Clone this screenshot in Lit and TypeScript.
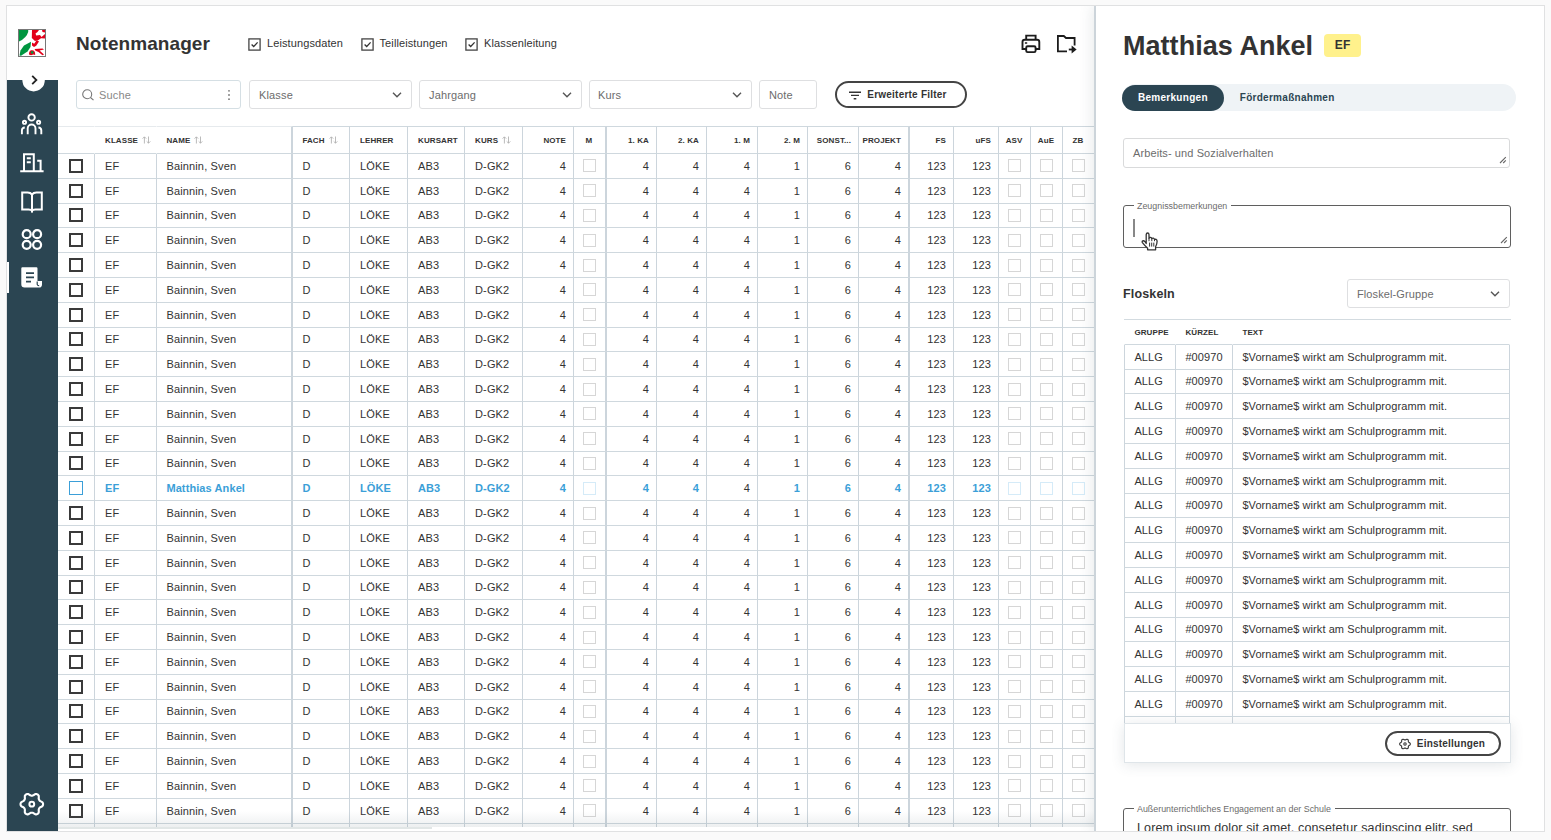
import { LitElement, html, svg, css, nothing } from "lit";
import { customElement } from "lit/decorators.js";
import { classMap } from "lit/directives/class-map.js";

type Kind = "text" | "num" | "box" | "check";
interface Column {
  label: string;
  value: string;
  kind: Kind;
  sort?: boolean;
  heavy?: boolean;
  plain?: boolean;
  narrow?: boolean;
}

const columns: Column[] = [
  { label: "", value: "", kind: "check", narrow: true },
  { label: "KLASSE", value: "EF", kind: "text", sort: true, narrow: true },
  { label: "NAME", value: "Bainnin, Sven", kind: "text", sort: true, heavy: true },
  { label: "FACH", value: "D", kind: "text", sort: true },
  { label: "LEHRER", value: "LÖKE", kind: "text" },
  { label: "KURSART", value: "AB3", kind: "text" },
  { label: "KURS", value: "D-GK2", kind: "text", sort: true },
  { label: "NOTE", value: "4", kind: "num" },
  { label: "M", value: "", kind: "box", heavy: true },
  { label: "1. KA", value: "4", kind: "num" },
  { label: "2. KA", value: "4", kind: "num" },
  { label: "1. M", value: "4", kind: "num", plain: true },
  { label: "2. M", value: "1", kind: "num" },
  { label: "SONST...", value: "6", kind: "num" },
  { label: "PROJEKT", value: "4", kind: "num", heavy: true },
  { label: "FS", value: "123", kind: "num" },
  { label: "uFS", value: "123", kind: "num" },
  { label: "ASV", value: "", kind: "box" },
  { label: "AuE", value: "", kind: "box" },
  { label: "ZB", value: "", kind: "box" },
];

const SELECTED_ROW = 13;
const ROW_COUNT = 27;

/** Closed outline of a soft six-toothed cog. */
function cogPath(cx: number, cy: number, r: number, depth: number): string {
  const points: string[] = [];
  for (let i = 0; i < 72; i++) {
    const a = (i / 72) * Math.PI * 2;
    const k = Math.cos(6 * a);
    const rr = r + depth * Math.sign(k) * Math.pow(Math.abs(k), 0.6);
    points.push(`${(cx + rr * Math.cos(a)).toFixed(2)} ${(cy + rr * Math.sin(a)).toFixed(2)}`);
  }
  return `M${points.join("L")}Z`;
}

const chevron = html`<svg class="chev" width="10" height="6" viewBox="0 0 10 6">
  <path d="M1 .8 5 4.7 9 .8" fill="none" stroke="#555" stroke-width="1.4" />
</svg>`;

const sortIcon = html`<svg class="sort" width="9" height="8" viewBox="0 0 9 8">
  <path d="M2.4 7.5V1M.6 2.6 2.4.8 4.2 2.6M6.5.5V7M4.7 5.4 6.5 7.2 8.3 5.4" fill="none" stroke="#aaa" stroke-width=".8" />
</svg>`;

const grip = html`<svg class="grip" width="8" height="8" viewBox="0 0 8 8">
  <path d="M1 7 6.8 1.2M4.2 7 6.8 4.4" stroke="#666" stroke-width="1.1" />
</svg>`;

const tick = html`<svg width="13" height="13" viewBox="0 0 13 13">
  <rect x=".9" y=".9" width="11.2" height="11.2" fill="none" stroke="#444" stroke-width="1.3" />
  <path d="M3.6 6.5 5.7 8.5 9.6 4.4" fill="none" stroke="#333" stroke-width="1.3" />
</svg>`;

const navIcons = [
  svg`<g fill="none" stroke="#fff" stroke-width="1.9"><circle cx="11.6" cy="6.4" r="3.2"/><circle cx="4.5" cy="11.3" r="1.6"/><circle cx="18.6" cy="11.3" r="1.6"/><path d="M7.7 23.3V17.5a3.9 4 0 0 1 7.8 0V23.3M1.9 23.3V19.6Q1.9 16.7 4.8 16.5M21.3 23.3V19.6Q21.3 16.7 18.4 16.5"/></g>`,
  svg`<path d="M.2 21.2H23.6M4 21V4.2H13.8V21M6.8 8.3H10.8M6.8 12.2H10.8M17.2 10.7H20.6V21" fill="none" stroke="#fff" stroke-width="2"/>`,
  svg`<path d="M12 23.6V5.6Q10.6 3.6 7.6 3.6H2.2V20.4H8.6Q11.4 20.4 12 21.8Q12.6 20.4 15.4 20.4H21.8V3.6H16.4Q13.4 3.6 12 5.6" fill="none" stroke="#fff" stroke-width="2"/>`,
  svg`<g fill="none" stroke="#fff" stroke-width="2.2"><circle cx="6.7" cy="6.2" r="4"/><circle cx="17.1" cy="6.2" r="4"/><circle cx="6.7" cy="16.8" r="4"/><circle cx="17.1" cy="16.8" r="4"/></g>`,
  svg`<path d="M2.4 1.3H16.4Q17.5 1.3 17.5 2.4V15H22V18.4Q22 21.5 19 21.5H4.6Q1.3 21.5 1.3 18.2V2.4Q1.3 1.3 2.4 1.3Z" fill="#fff"/><path d="M6 7.1H14M6 11.4H14M6 15.7H11" stroke="#2b4552" stroke-width="1.7"/><path d="M17.2 15.6V18.4Q17.6 19.9 19.2 19.7" fill="none" stroke="#2b4552" stroke-width="1.2"/>`,
];

@customElement("app-root")
export class AppRoot extends LitElement {
  static styles = css`
    :host { display: block; width: 1551px; height: 840px; box-sizing: border-box; padding: 5px 6px 8px; background: #fafafa; overflow: hidden;
      font: 11px/1.2 "Liberation Sans", Arial, sans-serif; letter-spacing: 0.15px; color: #333; }
    * { box-sizing: border-box; }
    svg { display: block; flex: none; }
    .frame { display: flex; height: 827px; border: 1px solid #e0e1e2; background: #fff; overflow: hidden; }
    .side { width: 51px; display: flex; flex-direction: column; flex: none; height: 826px; }
    .brand { height: 74px; padding: 23px 0 0 11px; }
    .nav { flex: 1; background: #2b4552; display: flex; flex-direction: column; position: relative; }
    .toggle { position: absolute; left: 15px; top: -11px; }
    .icons { padding: 31px 0 0 13px; display: flex; flex-direction: column; gap: 14px; }
    .icons .current { margin-top: -1px; }
    .marker { position: absolute; left: 0; top: 182px; width: 2px; height: 31px; background: #fff; }
    .settings { margin: auto 0 14px 12px; }
    .main { width: 1036px; flex: none; display: flex; flex-direction: column; }
    .top { height: 74px; display: flex; align-items: center; padding: 2px 17px 0 18px; }
    h1 { margin: 1px 0 0; font-size: 19px; letter-spacing: 0.08px; width: 172px; }
    .opts { display: flex; gap: 17.5px; flex: 1; }
    .opt { display: flex; align-items: center; gap: 6px; letter-spacing: 0.1px; }
    .tools { display: flex; gap: 15px; }
    .filters { display: flex; align-items: center; height: 29px; padding-left: 18px; color: #6c6c6c; }
    .field { height: 29px; width: 163px; border: 1px solid #dedfe1; border-radius: 3px; display: flex; align-items: center; padding: 2px 9px 0 9px; margin-right: 7px; background: #fff; color: #6c6c6c; }
    .field svg { margin-top: -1px; }
    .search { width: 165px; margin-right: 8px; border-color: #d5dfe4; padding: 2px 9px 0 5px; gap: 5px; color: #888; }
    .grow { flex: 1; }
    .w-kurs { width: 163px; padding-left: 8px; }
    .w-note { width: 58px; margin-right: 18px; }
    .pill { border: 2px solid #444; border-radius: 14px; display: flex; align-items: center; justify-content: center; font-weight: 700; font-size: 10px; letter-spacing: 0.22px; color: #333; gap: 6px; background: #fff; padding-top: 1px; }
    .adv { width: 132px; height: 27px; padding-right: 7px; }
    .adv svg { margin-left: 1px; }
    .tablewrap { margin-top: 17px; height: 701px; overflow: hidden; width: 1037px; position: relative; flex: none; }
    .tablewrap::after { content: ""; position: absolute; left: 0; right: 0; bottom: 0; height: 16px; background: linear-gradient(rgba(90, 110, 120, 0), rgba(90, 110, 120, 0.11)); }
    .row { display: grid; grid-template-columns: 37px 62px 136px 57px 58px 57px 58px 51px 33px 50px 50px 51px 50px 51px 51px 44px 45px 32px 32px 32px; height: 24.8px; }
    .cell { display: flex; align-items: center; border-right: 1px solid #ccd5dc; border-bottom: 1px solid #cfd8de; padding: 1.2px 7px 0 10px; white-space: nowrap; min-width: 0; }
    .row .cell:nth-child(3), .row .cell:nth-child(4) { padding-left: 9.4px; }
    .cell.heavy { border-right: 2px solid #ccd5dc; }
    .num { justify-content: flex-end; }
    .cell.box, .cell.check { justify-content: center; padding: 0 1px 0 0; }
    .head { height: 28px; font-weight: 700; font-size: 8px; letter-spacing: 0.1px; }
    .head .cell { border-top: 1px solid #cfd8de; padding-top: 2px; }
    .head .cell.box { padding-top: 2px; }
    .head .narrow { border-right-color: transparent; }
    .head .cell:nth-child(-n + 3) { border-top-color: #e6eaed; }
    .sort { margin: -2px 0 0 4px; }
    .tick { width: 14px; height: 14px; border: 2px solid #3a3a3a; }
    .soft { width: 13px; height: 13px; border: 1.5px solid #d6d6d6; }
    .sel .cell { color: #3b9fd8; font-weight: 700; letter-spacing: 0.1px; padding-top: 0; }
    .sel .cell.plain { color: #333; font-weight: 400; }
    .sel .tick { border: 1.5px solid #3b9fd8; width: 14px; height: 14px; }
    .sel .soft { border-color: #d5ebf8; }
    .scroll { width: 374px; height: 2px; background: #e1e6e6; }
    .panel { flex: 1; border-left: 2px solid #ccd4da; background: #fff; box-shadow: -3px 0 12px rgba(60, 80, 90, 0.1); position: relative; z-index: 1; padding: 26px 33px 0 27px; display: flex; flex-direction: column; height: 826px; overflow: visible; }
    .person { display: flex; align-items: center; height: 28px; gap: 11px; }
    h2 { margin: 0; font-size: 27px; line-height: 28px; letter-spacing: 0.04px; }
    .badge { width: 37px; height: 23px; border-radius: 4px; background: #fff18c; display: flex; align-items: center; justify-content: center; font-weight: 700; font-size: 12px; letter-spacing: 0.3px; margin-top: -1px; }
    .tabs { margin: 24px -6px 0 -1px; height: 27px; border-radius: 14px; background: #eff3f6; display: flex; align-items: center; font-weight: 700; font-size: 10px; letter-spacing: 0.28px; color: #2b4552; flex: none; width: 394px; }
    .tab { height: 26px; padding: 0 16px; border-radius: 13px; display: flex; align-items: center; }
    .tab.on { background: #2b4552; color: #fff; }
    .area { width: 388px; border: 1px solid #d9dadb; border-radius: 3px; position: relative; flex: none; color: #6c6c6c; }
    .grip { position: absolute; right: 2px; bottom: 3px; }
    .first { margin-top: 27px; height: 30px; padding: 8px 9px; width: 387px; letter-spacing: 0.1px; }
    .second { margin-top: 37px; height: 43px; border-color: #5f5f5f; }
    .legend { position: absolute; left: 10px; top: -5px; background: #fff; padding: 0 4px 0 3px; font-size: 8.9px; letter-spacing: 0; line-height: 11px; color: #6c6c6c; }
    .caret { position: absolute; left: 9px; top: 13px; width: 1.5px; height: 18px; background: #888; }
    .hand { position: absolute; left: 17px; top: 26px; }
    .bar { display: flex; align-items: center; justify-content: space-between; width: 387px; height: 29px; margin-top: 31px; flex: none; }
    h3 { margin: 2px 0 0; font-size: 12.5px; letter-spacing: 0.15px; }
    .bar .field { margin: 0; width: 163px; letter-spacing: 0.1px; }
    .phrases { width: 387px; margin: 11px 0 0 1px; height: 404px; overflow: hidden; flex: none; border-top: 1px solid #d3dbe0; }
    .prow { display: grid; grid-template-columns: 52px 57px 277px; height: 24.8px; }
    .prow .cell:first-child { border-left: 1px solid #ccd5dc; }
    .prow .cell { letter-spacing: 0.08px; padding-right: 0; padding-left: 9.4px; border-right-color: #ccd5dc; }
    .phead { font-weight: 700; font-size: 8px; }
    .phead .cell, .phead .cell:first-child { border-left-color: transparent; border-right-color: transparent; letter-spacing: 0.1px; }
    .foot { width: 387px; height: 40px; margin-left: 1px; border: 1px solid #dfe5e9; display: flex; justify-content: flex-end; align-items: center; padding-right: 9px; box-shadow: 0 2px 14px rgba(60, 80, 90, 0.14); background: #fff; flex: none; position: relative; }
    .foot .pill { width: 116px; height: 25px; padding-right: 2px; }
    .last { margin-top: 45px; height: 60px; border-color: #5f5f5f; padding: 12px 13px; font-size: 12.5px; letter-spacing: 0.12px; color: #333; white-space: nowrap; }
  `;

  private cell(c: Column, selected: boolean) {
    const cls = classMap({ cell: true, [c.kind]: true, heavy: !!c.heavy, plain: !!c.plain });
    const body =
      c.kind === "check" ? html`<span class="tick"></span>` :
      c.kind === "box" ? html`<span class="soft"></span>` :
      selected && c.label === "NAME" ? "Matthias Ankel" : c.value;
    return html`<div class=${cls}>${body}</div>`;
  }

  private table() {
    return html`<div class="tablewrap">
      <div class="row head">
        ${columns.map((c) => html`<div class=${classMap({ cell: true, [c.kind]: true, heavy: !!c.heavy, narrow: !!c.narrow })}>${c.label}${c.sort ? sortIcon : nothing}</div>`)}
      </div>
      ${Array.from({ length: ROW_COUNT }, (_, i) => html`<div class=${classMap({ row: true, sel: i === SELECTED_ROW })}>
        ${columns.map((c) => this.cell(c, i === SELECTED_ROW))}
      </div>`)}
      <div class="row">
        ${columns.map((c) => html`<div class=${classMap({ cell: true, heavy: !!c.heavy })}></div>`)}
      </div>
    </div>`;
  }

  private sidebar() {
    return html`<div class="side">
      <div class="brand">
        <svg width="28" height="28" viewBox="0 0 28 28">
          <rect x=".5" y=".5" width="27" height="27" fill="#fff" stroke="#777" />
          <path d="M1 1H10.2V3Q8.5 9 1 12.5Z" fill="#009640" />
          <path d="M1.5 26.5 2.5 21.5 6 16.5 13 12.8 12.5 18 9.5 22.5 3 26.8Z" fill="#009640" />
          <path d="M14 1H21L19.5 3 17.5 4.5 18.2 6.5 22 6 23.5 8 27 5V9.5L23 9.2 20.5 11 17 12 13.8 9Z" fill="#e2001a" />
          <path d="M24 1H27V3.5L24.5 3Z" fill="#e2001a" />
          <path d="M14 13.5 16.2 14.8 18.8 11 21 12.5 18.2 16.8 16 18 14 16.5Z" fill="#e2001a" />
          <path d="M11 25.5Q10.8 22.2 13.2 21.3 16.3 20.6 17 23.5L17.2 26 15.5 25.4 13 26.2Z" fill="#e2001a" />
          <circle cx="14.2" cy="23.4" r="1.3" fill="#009640" />
          <path d="M16.5 20 24.5 19.6 26 20.5 21.5 21.4 26 25.5 24.5 26.2 20.5 23 17.5 21.8Z" fill="#e2001a" />
        </svg>
      </div>
      <div class="nav">
        <svg class="toggle" width="24" height="24" viewBox="0 0 24 24">
          <circle cx="11.6" cy="11.2" r="11.2" fill="#fff" />
          <path d="M10.2 6.8 14.4 11 10.2 15.2" fill="none" stroke="#222" stroke-width="1.8" />
        </svg>
        <div class="marker"></div>
        <div class="icons">
          ${navIcons.map((icon, i) => html`<svg class=${classMap({ current: i === 4 })} width="25" height="25" viewBox="0 0 25 25">${icon}</svg>`)}
        </div>
        <svg class="settings" width="26" height="26" viewBox="0 0 26 26">
          <path d=${cogPath(12.8, 12.2, 9.9, 1.4)} fill="none" stroke="#fff" stroke-width="2.1" stroke-linejoin="round" />
          <circle cx="12.8" cy="12.2" r="2.4" fill="none" stroke="#fff" stroke-width="2" />
        </svg>
      </div>
    </div>`;
  }

  private main() {
    return html`<div class="main">
      <div class="top">
        <h1>Notenmanager</h1>
        <div class="opts">
          ${["Leistungsdaten", "Teilleistungen", "Klassenleitung"].map((t) => html`<span class="opt">${tick}${t}</span>`)}
        </div>
        <div class="tools">
          <svg width="20" height="20" viewBox="0 0 20 20" fill="none" stroke="#1c1c1c" stroke-width="1.9">
            <path d="M5.2 5.6V1.6H14.6V5.6M5 15H1.5V8Q1.5 5.8 3.7 5.8H16.1Q18.3 5.8 18.3 8V15H15" />
            <rect x="5.2" y="12.3" width="9.4" height="5.8" rx="1.4" />
            <path d="M3.9 9H6.2" stroke-width="1.5" />
          </svg>
          <svg width="21" height="20" viewBox="0 0 21 20" fill="none" stroke="#1c1c1c" stroke-width="1.8">
            <path d="M11 17.4H1.9V2H7.8L10 4H18.6V11.5" />
            <path d="M12.8 15.5H19" />
            <path d="M15.6 11.6 20.6 15.5 15.6 19.4Z" fill="#1c1c1c" stroke="none" />
          </svg>
        </div>
      </div>
      <div class="filters">
        <div class="field search">
          <svg width="12" height="12" viewBox="0 0 12 12" fill="none" stroke="#777" stroke-width="1.1"><circle cx="5.2" cy="5.2" r="4.5" /><path d="M8.5 8.5 11.5 11.2" /></svg>
          <span class="grow">Suche</span>
          <svg width="4" height="12" viewBox="0 0 4 12" fill="#777"><circle cx="2" cy="1.8" r=".9" /><circle cx="2" cy="6" r=".9" /><circle cx="2" cy="10.2" r=".9" /></svg>
        </div>
        <div class="field"><span class="grow">Klasse</span>${chevron}</div>
        <div class="field"><span class="grow">Jahrgang</span>${chevron}</div>
        <div class="field w-kurs"><span class="grow">Kurs</span>${chevron}</div>
        <div class="field w-note">Note</div>
        <div class="pill adv">
          <svg width="12" height="9" viewBox="0 0 12 9"><path d="M0 1.2H12M2 4.4H10M4.7 7.7H7.3" stroke="#333" stroke-width="1.4" /></svg>
          Erweiterte Filter
        </div>
      </div>
      ${this.table()}
      <div class="scroll"></div>
    </div>`;
  }

  private panel() {
    return html`<div class="panel">
      <div class="person"><h2>Matthias Ankel</h2><span class="badge">EF</span></div>
      <div class="tabs"><span class="tab on">Bemerkungen</span><span class="tab">Fördermaßnahmen</span></div>
      <div class="area first">Arbeits- und Sozialverhalten${grip}</div>
      <div class="area second">
        <span class="legend">Zeugnissbemerkungen</span>
        <span class="caret"></span>
        ${grip}
        <svg class="hand" width="18" height="20" viewBox="0 0 18 20">
          <path d="M5.2 11.5V2.6Q5.3 1 6.6 1 7.9 1 8 2.6V6.2Q8.3 5.2 9.4 5.3 10.6 5.4 10.8 6.6 11.3 5.9 12.3 6.1 13.3 6.4 13.5 7.5 14.2 7 15.1 7.4 16.1 7.9 16.1 9.3 16.1 12 14.6 14.8V17.8H6.6V16.2Q4 13.8 1.4 10.6 .8 9.4 1.8 8.9 2.8 8.4 3.8 9.5Z" fill="#fff" stroke="#333" stroke-width="1.3" stroke-linejoin="round" />
          <path d="M8.6 10.6V14.6M10.7 10.6V14.6M12.8 10.6V14.6M8 6V9.2M10.8 6.5V9.2M13.5 7.4V9.2" stroke="#333" stroke-width="1" />
        </svg>
      </div>
      <div class="bar"><h3>Floskeln</h3><div class="field"><span class="grow">Floskel-Gruppe</span>${chevron}</div></div>
      <div class="phrases">
        <div class="prow phead"><div class="cell">GRUPPE</div><div class="cell">KÜRZEL</div><div class="cell">TEXT</div></div>
        ${Array.from({ length: 15 }, () => html`<div class="prow"><div class="cell">ALLG</div><div class="cell">#00970</div><div class="cell">$Vorname$ wirkt am Schulprogramm mit.</div></div>`)}
        <div class="prow"><div class="cell"></div><div class="cell"></div><div class="cell"></div></div>
      </div>
      <div class="foot">
        <div class="pill">
          <svg width="12" height="12" viewBox="0 0 12 12"><path d=${cogPath(6, 6, 4.7, 0.6)} fill="none" stroke="#333" stroke-width="1.1" /><circle cx="6" cy="6" r="1.2" fill="none" stroke="#333" stroke-width="1.1" /></svg>
          Einstellungen
        </div>
      </div>
      <div class="area last"><span class="legend">Außerunterrichtliches Engagement an der Schule</span>Lorem ipsum dolor sit amet, consetetur sadipscing elitr, sed</div>
    </div>`;
  }

  render() {
    return html`<div class="frame">${this.sidebar()}${this.main()}${this.panel()}</div>`;
  }
}
